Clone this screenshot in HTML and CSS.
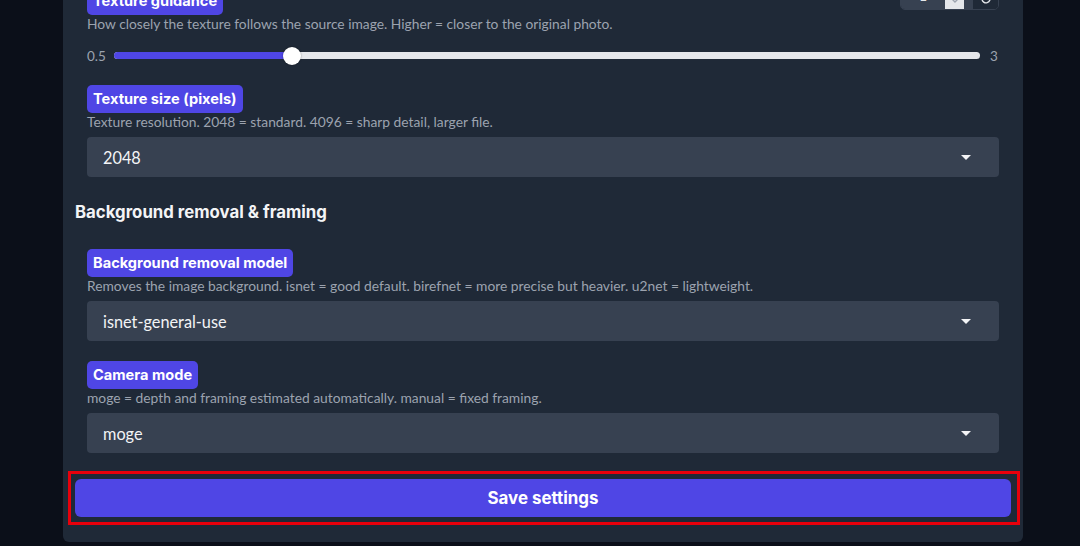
FILE: index.html
```html
<!DOCTYPE html>
<html lang="en">
<head>
    <meta charset="UTF-8">
    <title>Settings</title>
    <link rel="stylesheet" href="styles.css">
</head>
<body>
    <div class="panel">
        <div class="group">
            <div class="field">
                <div class="label-row">
                    <span class="badge">Texture guidance</span>
                    <div class="number">
                        <span class="number-val">1</span>
                        <span class="spin">
                            <svg width="10" height="6" viewBox="0 0 10 6"><path d="M1 1l4 4 4-4" fill="none" stroke="#9ca3af" stroke-width="1.4"/></svg>
                        </span>
                        <button class="reset" type="button">
                            <svg width="12" height="12" viewBox="0 0 12 12"><path d="M3 3.2A4 4 0 1 1 2 6" fill="none" stroke="#e5e7eb" stroke-width="1.4"/><path d="M1.6 1.6v2.6h2.6" fill="none" stroke="#e5e7eb" stroke-width="1.2"/></svg>
                        </button>
                    </div>
                </div>
                <p class="desc">How closely the texture follows the source image. Higher = closer to the original photo.</p>
                <div class="slider-row">
                    <span class="range-min">0.5</span>
                    <div class="track">
                        <div class="fill" style="width: 20.5%"></div>
                        <div class="thumb" style="left: 20.5%"></div>
                    </div>
                    <span class="range-max">3</span>
                </div>
            </div>

            <div class="field">
                <span class="badge">Texture size (pixels)</span>
                <p class="desc">Texture resolution. 2048 = standard. 4096 = sharp detail, larger file.</p>
                <div class="select"><span>2048</span><span class="caret"></span></div>
            </div>
        </div>

        <h3 class="section-title">Background removal &amp; framing</h3>

        <div class="group">
            <div class="field">
                <span class="badge">Background removal model</span>
                <p class="desc">Removes the image background. isnet = good default. birefnet = more precise but heavier. u2net = lightweight.</p>
                <div class="select"><span>isnet-general-use</span><span class="caret"></span></div>
            </div>

            <div class="field">
                <span class="badge">Camera mode</span>
                <p class="desc">moge = depth and framing estimated automatically. manual = fixed framing.</p>
                <div class="select"><span>moge</span><span class="caret"></span></div>
            </div>
        </div>

        <div class="save-wrap">
            <button class="save" type="button">Save settings</button>
        </div>
    </div>
</body>
</html>
```

FILE: styles.css
```css
body { margin: 0; background: #0b0f19; font-family: "Lato", "Liberation Sans", sans-serif; color: #e5e7eb; overflow: hidden; }
.panel { width: 936px; margin: -13px 0 0 63px; padding: 0 12px 17px; background: #1f2937; border-radius: 0 0 6px 6px; }
.group { display: flex; flex-direction: column; gap: 20px; padding: 0 12px; }
.field { display: flex; flex-direction: column; align-items: flex-start; }
.label-row { display: flex; justify-content: space-between; align-items: flex-start; width: 100%; }
.badge { display: inline-block; height: 28px; line-height: 28px; padding: 0 6px; background: #4f46e5; color: #fff; border-radius: 5px; font-family: "Inter", sans-serif; font-weight: 700; font-size: 14.6px; }
.desc { margin: 0; height: 18px; line-height: 18px; font-size: 13.8px; color: #9ca3af; }
.select { box-sizing: border-box; width: 100%; height: 40px; margin-top: 6px; padding: 0 28px 0 16px; display: flex; align-items: center; justify-content: space-between; background: #374151; border-radius: 4px; font-size: 16.3px; color: #f3f4f6; }
.caret { width: 0; height: 0; border-left: 5px solid transparent; border-right: 5px solid transparent; border-top: 5px solid #f3f4f6; }

.number { display: flex; height: 30px; margin-top: -7px; width: 99px; border: 1px solid #374151; border-radius: 5px; box-sizing: border-box; overflow: hidden; }
.number-val { width: 44px; background: #374151; text-align: center; line-height: 30px; font-size: 14px; }
.spin { width: 19px; background: #e5e7eb; display: flex; align-items: flex-end; justify-content: center; padding-bottom: 6px; box-sizing: border-box; }
.number-val + .spin { margin-right: 8px; box-shadow: 8px 0 0 #374151; }
.reset { flex: 1; border: none; border-left: 1px solid #374151; background: #1f2937; padding: 0; display: flex; align-items: flex-end; justify-content: center; padding-bottom: 4px; }

.slider-row { display: flex; align-items: center; width: 100%; height: 19px; margin-top: 13px; font-size: 13.5px; color: #9ca3af; }
.range-min { width: 27px; }
.range-max { width: 19px; padding-left: 10px; box-sizing: border-box; }
.track { position: relative; flex: 1; height: 7px; background: #e5e7eb; border-radius: 4px; }
.fill { height: 100%; background: #4f46e5; border-radius: 4px 0 0 4px; }
.thumb { position: absolute; top: 50%; width: 18px; height: 18px; margin: -9px 0 0 -9px; background: #fff; border-radius: 50%; box-shadow: 0 0 2px rgba(0,0,0,0.4); }

.section-title { margin: 24px 0 26px; font-family: "Inter", sans-serif; font-size: 16.8px; font-weight: 700; line-height: 22px; color: #f3f4f6; }

.save-wrap { margin: 18px -9px 0 -7px; padding: 5px 6px 5px 4px; border: 3px solid #e8000b; }
.save { display: block; width: 100%; height: 38px; border: none; border-radius: 6px; background: #4f46e5; color: #fff; font-family: "Inter", sans-serif; font-weight: 700; font-size: 16.9px; cursor: pointer; }
```
